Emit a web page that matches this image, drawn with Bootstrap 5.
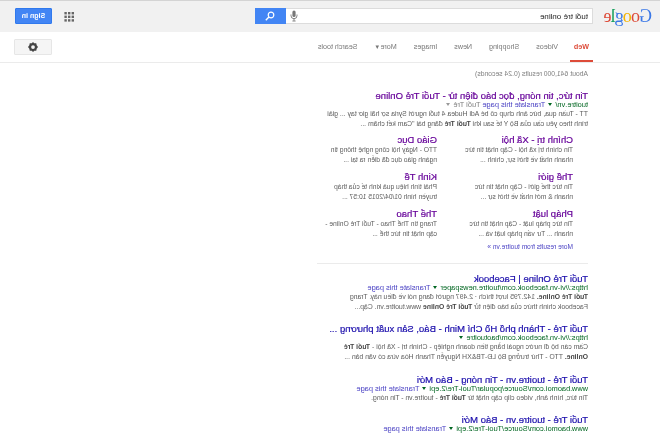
<!DOCTYPE html>
<html lang="vi">
<head>
<meta charset="utf-8">
<title>tuổi trẻ online</title>
<link href="https://cdn.jsdelivr.net/npm/bootstrap@5.3.0/dist/css/bootstrap.min.css" rel="stylesheet">
<script src="https://cdn.jsdelivr.net/npm/bootstrap@5.3.0/dist/js/bootstrap.bundle.min.js"></script>
<style>
html,body{margin:0;height:433px;overflow:hidden;background:#fff;}
body{font-family:"Liberation Sans",Arial,sans-serif;color:#545454;}
.flip{width:660px;height:433px;overflow:hidden;transform:scaleX(-1);filter:blur(.45px);}
.topstrip{height:32px;background:#f1f1f1;border-top:1px solid #d4d4d4;padding:7px 15px 0 8px;}
.glogo{width:46px;margin-right:13px;font-family:"Liberation Serif",serif;font-size:18px;line-height:17px;letter-spacing:-.9px;white-space:nowrap;}
.glogo .b{color:#3b78e7}.glogo .r{color:#dd4b39}.glogo .y{color:#f4b400}.glogo .g{color:#0f9d58}
.searchwrap{width:307px;height:16px;}
.searchwrap .form-control{height:16px;min-height:0;padding:0 0 0 4px;border:1px solid #dcdcdc;border-right:0;border-radius:0;font-size:8px;line-height:14px;color:#222;box-shadow:none;}
.micmark{position:absolute;top:2px;right:4px;width:8px;height:12px;}
.gobtn{width:31px;height:16px;padding:0;border:0;border-radius:0;background:#4285f4;display:flex;align-items:center;justify-content:center;}
.gridmark{width:10px;height:10px;margin-left:auto;margin-right:12px;}
.signbtn{width:37px;height:16px;padding:0;border:1px solid #3079ed;border-radius:1px;background:#4285f4;color:#fff;font-size:7px;font-weight:700;line-height:14px;}
.tabrow{height:31px;border-bottom:1px solid #ebebeb;padding:0 14px 0 67px;}
.tabitem{height:30px;padding:0 8.5px;font-size:7.15px;line-height:30px;color:#777;text-decoration:none;border-bottom:2px solid transparent;white-space:nowrap;}
.tabitem.on{color:#dd4b39;font-weight:700;font-size:7.2px;padding:0 4px;border-bottom-color:#dd4b39;margin-right:3.5px;}
.gearbtn{width:38px;height:16px;padding:0;margin-left:auto;margin-top:7px;border:1px solid #e6e6e6;border-radius:1px;background:#f5f5f5;display:flex;align-items:center;justify-content:center;}
.resblock{width:290px;margin-left:72px;}
.statline{height:10px;margin-top:6px;font-size:6.8px;line-height:10px;color:#808080;white-space:nowrap;}
.rtitle{display:block;font-size:9.5px;line-height:9px;color:#1a0dab;text-decoration:none;white-space:nowrap;-webkit-text-stroke:.2px currentColor;}
.rtitle.seen{color:#609;}
.rcite{font-size:7.45px;line-height:9px;white-space:nowrap;color:#006621;}
.rcite a{color:#4b43c4;text-decoration:none;}
.rcite .mut{color:#808080;}
.caretm{display:inline-block;width:0;height:0;margin:0 3px 1px;border-left:2.5px solid transparent;border-right:2.5px solid transparent;border-top:3px solid #006621;}
.caretm.gr{border-top-color:#999;}
.rsnip{font-size:6.85px;line-height:10px;white-space:nowrap;color:#5c5c5c;}
.rsnip b{color:#444;}
.sitegrid{display:grid;grid-template-columns:136px 136px;padding-left:15px;margin-top:5px;row-gap:6px;}
.sitegrid .rtitle{line-height:11px;}
.sitegrid .rsnip{font-size:6.7px;}
.morelink{font-size:6.6px;line-height:10px;color:#4b43c4;text-decoration:none;display:block;margin:3px 0 0 15px;}
.sepline{width:271px;height:1px;background:#ebebeb;margin:11px 0 9.5px;}
.rblock{margin-bottom:12.5px;}
.firstres{margin-top:12px;}
</style>
</head>
<body>
<div class="flip">
  <header class="topstrip d-flex align-items-start">
    <div class="glogo"><span class="b">G</span><span class="r">o</span><span class="y">o</span><span class="b">g</span><span class="g">l</span><span class="r">e</span></div>
    <div class="searchwrap position-relative flex-shrink-0">
      <input class="form-control" type="text" value="tuổi trẻ online" aria-label="Search">
      <svg class="micmark" viewBox="0 0 8 12"><rect x="2.4" y="0.5" width="3.2" height="6.5" rx="1.6" fill="#777"/><path d="M1 4.5v1.2a3 3 0 0 0 6 0V4.5M4 8.8v2M2.4 11h3.2" fill="none" stroke="#777" stroke-width=".9"/></svg>
    </div>
    <button class="gobtn btn flex-shrink-0" aria-label="Search"><svg width="10" height="10" viewBox="0 0 10 10"><circle cx="4" cy="4" r="2.8" fill="none" stroke="#fff" stroke-width="1.2"/><path d="M6.1 6.1 9.2 9.2" stroke="#fff" stroke-width="1.4"/></svg></button>
    <svg class="gridmark mt-1" viewBox="0 0 10 10" fill="#666"><rect x="0" y="0" width="2.4" height="2.4"/><rect x="3.6" y="0" width="2.4" height="2.4"/><rect x="7.2" y="0" width="2.4" height="2.4"/><rect x="0" y="3.6" width="2.4" height="2.4"/><rect x="3.6" y="3.6" width="2.4" height="2.4"/><rect x="7.2" y="3.6" width="2.4" height="2.4"/><rect x="0" y="7.2" width="2.4" height="2.4"/><rect x="3.6" y="7.2" width="2.4" height="2.4"/><rect x="7.2" y="7.2" width="2.4" height="2.4"/></svg>
    <button class="signbtn btn flex-shrink-0">Sign in</button>
  </header>
  <nav class="tabrow d-flex align-items-start">
    <a class="tabitem on" href="#">Web</a>
    <a class="tabitem" href="#">Videos</a>
    <a class="tabitem" href="#">Shopping</a>
    <a class="tabitem" href="#">News</a>
    <a class="tabitem" href="#">Images</a>
    <a class="tabitem" href="#">More ▾</a>
    <a class="tabitem" href="#">Search tools</a>
    <button class="gearbtn btn" aria-label="Settings"><svg width="10" height="10" viewBox="0 0 24 24"><path fill="#444" fill-rule="evenodd" d="M12 0 15 3.2 19.8 3 20.8 7.6 24 12 20.8 16.4 19.8 21 15 20.8 12 24 9 20.8 4.2 21 3.2 16.4 0 12 3.2 7.6 4.2 3 9 3.2ZM12 7.5a4.5 4.5 0 1 0 0 9 4.5 4.5 0 0 0 0-9Z"/></svg></button>
  </nav>
  <main class="resblock">
    <div class="statline">About 641,000 results (0.24 seconds)</div>
    <a class="rtitle seen firstres" href="#">Tin tức, tin nóng, đọc báo điện tử - Tuổi Trẻ Online</a>
    <div class="rcite">tuoitre.vn/<span class="caretm"></span><a href="#">Translate this page</a> <span class="mut">Tuổi Trẻ</span><span class="caretm gr"></span></div>
    <div class="rsnip">TT - Tuần qua, bức ảnh chụp cô bé Adi Hudea 4 tuổi người Syria sợ hãi giơ tay ... giải</div>
    <div class="rsnip">trình theo yêu cầu của Bộ Y tế sau khi <b>Tuổi Trẻ</b> đăng bài "Cam kết chăm ...</div>
    <div class="sitegrid">
      <div><a class="rtitle seen" href="#">Chính trị - Xã hội</a><div class="rsnip">Tin chính trị xã hội - Cập nhật tin tức</div><div class="rsnip">nhanh nhất về thời sự, chính ...</div></div>
      <div><a class="rtitle seen" href="#">Giáo Dục</a><div class="rsnip">TTO - Ngày hội công nghệ thông tin</div><div class="rsnip">ngành giáo dục đã diễn ra tại ...</div></div>
      <div><a class="rtitle seen" href="#">Thế giới</a><div class="rsnip">Tin tức thế giới - Cập nhật tin tức</div><div class="rsnip">nhanh &amp; mới nhất về thời sự ...</div></div>
      <div><a class="rtitle seen" href="#">Kinh Tế</a><div class="rsnip">Phải tính hiệu quả kinh tế của tháp</div><div class="rsnip">truyền hình 01/04/2015 10:57 ...</div></div>
      <div><a class="rtitle seen" href="#">Pháp luật</a><div class="rsnip">Tin tức pháp luật - Cập nhật tin tức</div><div class="rsnip">nhanh ... Tư vấn pháp luật và ...</div></div>
      <div><a class="rtitle seen" href="#">Thể Thao</a><div class="rsnip">Trang tin Thể Thao - Tuổi Trẻ Online -</div><div class="rsnip">cập nhật tin tức thể ...</div></div>
    </div>
    <a class="morelink" href="#">More results from tuoitre.vn »</a>
    <div class="sepline"></div>
    <div class="rblock">
      <a class="rtitle" href="#">Tuổi Trẻ Online | Facebook</a>
      <div class="rcite">https://vi-vn.facebook.com/tuoitre.newspaper<span class="caretm"></span><a href="#">Translate this page</a></div>
      <div class="rsnip"><b>Tuổi Trẻ Online.</b> 142.795 lượt thích · 2.497 người đang nói về điều này. Trang</div>
      <div class="rsnip">Facebook chính thức của báo điện tử <b>Tuổi Trẻ Online</b> www.tuoitre.vn. Cập...</div>
    </div>
    <div class="rblock">
      <a class="rtitle" href="#">Tuổi Trẻ - Thành phố Hồ Chí Minh - Báo, Sản xuất phương ...</a>
      <div class="rcite">https://vi-vn.facebook.com/baotuoitre<span class="caretm"></span></div>
      <div class="rsnip">Cầm cán bộ đi nước ngoài bằng tiền doanh nghiệp - Chính trị - Xã hội - <b>Tuổi Trẻ</b></div>
      <div class="rsnip"><b>Online.</b> TTO - Thứ trưởng Bộ LĐ-TB&amp;XH Nguyễn Thanh Hòa vừa có văn bản ...</div>
    </div>
    <div class="rblock">
      <a class="rtitle" href="#">Tuổi Trẻ - tuoitre.vn - Tin nóng - Báo Mới</a>
      <div class="rcite">www.baomoi.com/Source/popular/Tuoi-Tre/2.epi<span class="caretm"></span><a href="#">Translate this page</a></div>
      <div class="rsnip">Tin tức, hình ảnh, video clip cập nhật từ <b>Tuổi Trẻ</b> - tuoitre.vn - Tin nóng.</div>
    </div>
    <div class="rblock">
      <a class="rtitle" href="#">Tuổi Trẻ - tuoitre.vn - Báo Mới</a>
      <div class="rcite">www.baomoi.com/Source/Tuoi-Tre/2.epi<span class="caretm"></span><a href="#">Translate this page</a></div>
    </div>
  </main>
</div>
</body>
</html>
